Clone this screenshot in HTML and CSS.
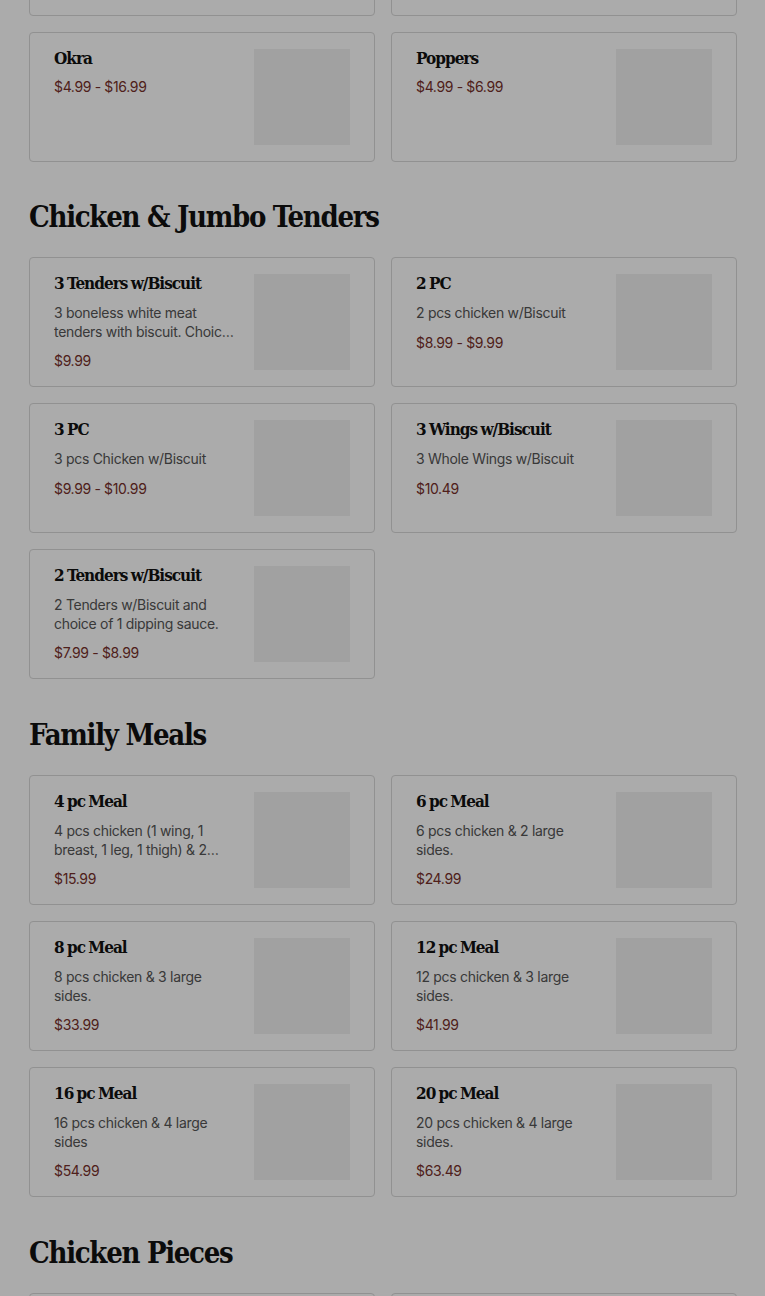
FILE: index.html
```html
<!DOCTYPE html>
<html lang="en">
<head>
    <meta charset="UTF-8">
    <meta name="viewport" content="width=device-width, initial-scale=1.0">
    <title>Menu</title>
    <link rel="stylesheet" href="styles.css">
</head>
<body>
    <div class="menu">
        <div class="item-grid first-grid">
            <div class="item-card">
                <div class="item-info">
                    <h3 class="item-name">Fried Pickles</h3>
                    <div class="item-price">$4.99</div>
                </div>
                <div class="item-image"></div>
            </div>
            <div class="item-card">
                <div class="item-info">
                    <h3 class="item-name">Mac &amp; Cheese</h3>
                    <div class="item-price">$3.99</div>
                </div>
                <div class="item-image"></div>
            </div>
            <div class="item-card">
                <div class="item-info">
                    <h3 class="item-name">Okra</h3>
                    <div class="item-price">$4.99 - $16.99</div>
                </div>
                <div class="item-image"></div>
            </div>
            <div class="item-card">
                <div class="item-info">
                    <h3 class="item-name">Poppers</h3>
                    <div class="item-price">$4.99 - $6.99</div>
                </div>
                <div class="item-image"></div>
            </div>
        </div>

        <div class="section">
            <h2 class="section-title">Chicken &amp; Jumbo Tenders</h2>
            <div class="item-grid">
                <div class="item-card">
                    <div class="item-info">
                        <h3 class="item-name">3 Tenders w/Biscuit</h3>
                        <p class="item-desc">3 boneless white meat tenders with biscuit. Choice of 1 dipping sauce.</p>
                        <div class="item-price">$9.99</div>
                    </div>
                    <div class="item-image"></div>
                </div>
                <div class="item-card">
                    <div class="item-info">
                        <h3 class="item-name">2 PC</h3>
                        <p class="item-desc">2 pcs chicken w/Biscuit</p>
                        <div class="item-price">$8.99 - $9.99</div>
                    </div>
                    <div class="item-image"></div>
                </div>
                <div class="item-card">
                    <div class="item-info">
                        <h3 class="item-name">3 PC</h3>
                        <p class="item-desc">3 pcs Chicken w/Biscuit</p>
                        <div class="item-price">$9.99 - $10.99</div>
                    </div>
                    <div class="item-image"></div>
                </div>
                <div class="item-card">
                    <div class="item-info">
                        <h3 class="item-name">3 Wings w/Biscuit</h3>
                        <p class="item-desc">3 Whole Wings w/Biscuit</p>
                        <div class="item-price">$10.49</div>
                    </div>
                    <div class="item-image"></div>
                </div>
                <div class="item-card">
                    <div class="item-info">
                        <h3 class="item-name">2 Tenders w/Biscuit</h3>
                        <p class="item-desc">2 Tenders w/Biscuit and choice of 1 dipping sauce.</p>
                        <div class="item-price">$7.99 - $8.99</div>
                    </div>
                    <div class="item-image"></div>
                </div>
            </div>
        </div>

        <div class="section">
            <h2 class="section-title">Family Meals</h2>
            <div class="item-grid">
                <div class="item-card">
                    <div class="item-info">
                        <h3 class="item-name">4 pc Meal</h3>
                        <p class="item-desc">4 pcs chicken (1 wing, 1 breast, 1 leg, 1 thigh) &amp; 2 large sides.</p>
                        <div class="item-price">$15.99</div>
                    </div>
                    <div class="item-image"></div>
                </div>
                <div class="item-card">
                    <div class="item-info">
                        <h3 class="item-name">6 pc Meal</h3>
                        <p class="item-desc">6 pcs chicken &amp; 2 large sides.</p>
                        <div class="item-price">$24.99</div>
                    </div>
                    <div class="item-image"></div>
                </div>
                <div class="item-card">
                    <div class="item-info">
                        <h3 class="item-name">8 pc Meal</h3>
                        <p class="item-desc">8 pcs chicken &amp; 3 large sides.</p>
                        <div class="item-price">$33.99</div>
                    </div>
                    <div class="item-image"></div>
                </div>
                <div class="item-card">
                    <div class="item-info">
                        <h3 class="item-name">12 pc Meal</h3>
                        <p class="item-desc">12 pcs chicken &amp; 3 large sides.</p>
                        <div class="item-price">$41.99</div>
                    </div>
                    <div class="item-image"></div>
                </div>
                <div class="item-card">
                    <div class="item-info">
                        <h3 class="item-name">16 pc Meal</h3>
                        <p class="item-desc">16 pcs chicken &amp; 4 large sides</p>
                        <div class="item-price">$54.99</div>
                    </div>
                    <div class="item-image"></div>
                </div>
                <div class="item-card">
                    <div class="item-info">
                        <h3 class="item-name">20 pc Meal</h3>
                        <p class="item-desc">20 pcs chicken &amp; 4 large sides.</p>
                        <div class="item-price">$63.49</div>
                    </div>
                    <div class="item-image"></div>
                </div>
            </div>
        </div>

        <div class="section">
            <h2 class="section-title">Chicken Pieces</h2>
            <div class="item-grid">
                <div class="item-card">
                    <div class="item-info">
                        <h3 class="item-name">Breast</h3>
                        <div class="item-price">$3.99</div>
                    </div>
                    <div class="item-image"></div>
                </div>
                <div class="item-card">
                    <div class="item-info">
                        <h3 class="item-name">Thigh</h3>
                        <div class="item-price">$2.99</div>
                    </div>
                    <div class="item-image"></div>
                </div>
            </div>
        </div>
    </div>

    <div class="overlay"></div>
</body>
</html>
```

FILE: styles.css
```css
body {
    margin: 0;
    padding: 0;
    font-family: 'Inter', 'Noto Sans', sans-serif;
    background-color: #fff;
    color: #111;
    overflow: hidden;
}

.menu {
    padding: 0 28px 0 29px;
}

.first-grid {
    margin-top: -114px;
}

.item-grid {
    display: grid;
    grid-template-columns: 1fr 1fr;
    gap: 16px 16px;
}

.item-card {
    display: flex;
    justify-content: space-between;
    align-items: flex-start;
    height: 130px;
    padding: 16px 24px 16px 24px;
    border: 1px solid #d8d8d8;
    border-radius: 4px;
    background-color: #fff;
    box-sizing: border-box;
}

.item-info {
    flex: 1;
    min-width: 0;
    padding-right: 20px;
}

.item-name {
    margin: 0;
    font-family: 'DejaVu Serif Condensed', 'DejaVu Serif', serif;
    font-size: 17px;
    font-weight: bold;
    line-height: 19px;
    letter-spacing: -1px;
    word-spacing: -1px;
    color: #111;
}

.item-desc {
    margin: 11px 0 0 0;
    font-size: 14px;
    line-height: 18.5px;
    letter-spacing: -0.3px;
    color: #555;
    display: -webkit-box;
    -webkit-line-clamp: 2;
    -webkit-box-orient: vertical;
    overflow: hidden;
}

.item-price {
    margin-top: 10px;
    font-size: 14px;
    line-height: 18px;
    letter-spacing: -0.35px;
    color: #762f2a;
}

.item-desc + .item-price {
    margin-top: 11px;
}

.item-image {
    flex: none;
    width: 96px;
    height: 96px;
    background-color: #f0f0f0;
}

.section {
    margin-top: 37px;
}

.section + .section {
    margin-top: 38px;
}

.section-title {
    margin: 0 0 22px 0;
    font-family: 'DejaVu Serif Condensed', 'DejaVu Serif', serif;
    font-size: 29px;
    font-weight: bold;
    line-height: 36px;
    letter-spacing: -1.3px;
    color: #111;
}

.overlay {
    position: fixed;
    top: 0;
    left: 0;
    right: 0;
    bottom: 0;
    background-color: rgba(0, 0, 0, 0.33);
}
```
